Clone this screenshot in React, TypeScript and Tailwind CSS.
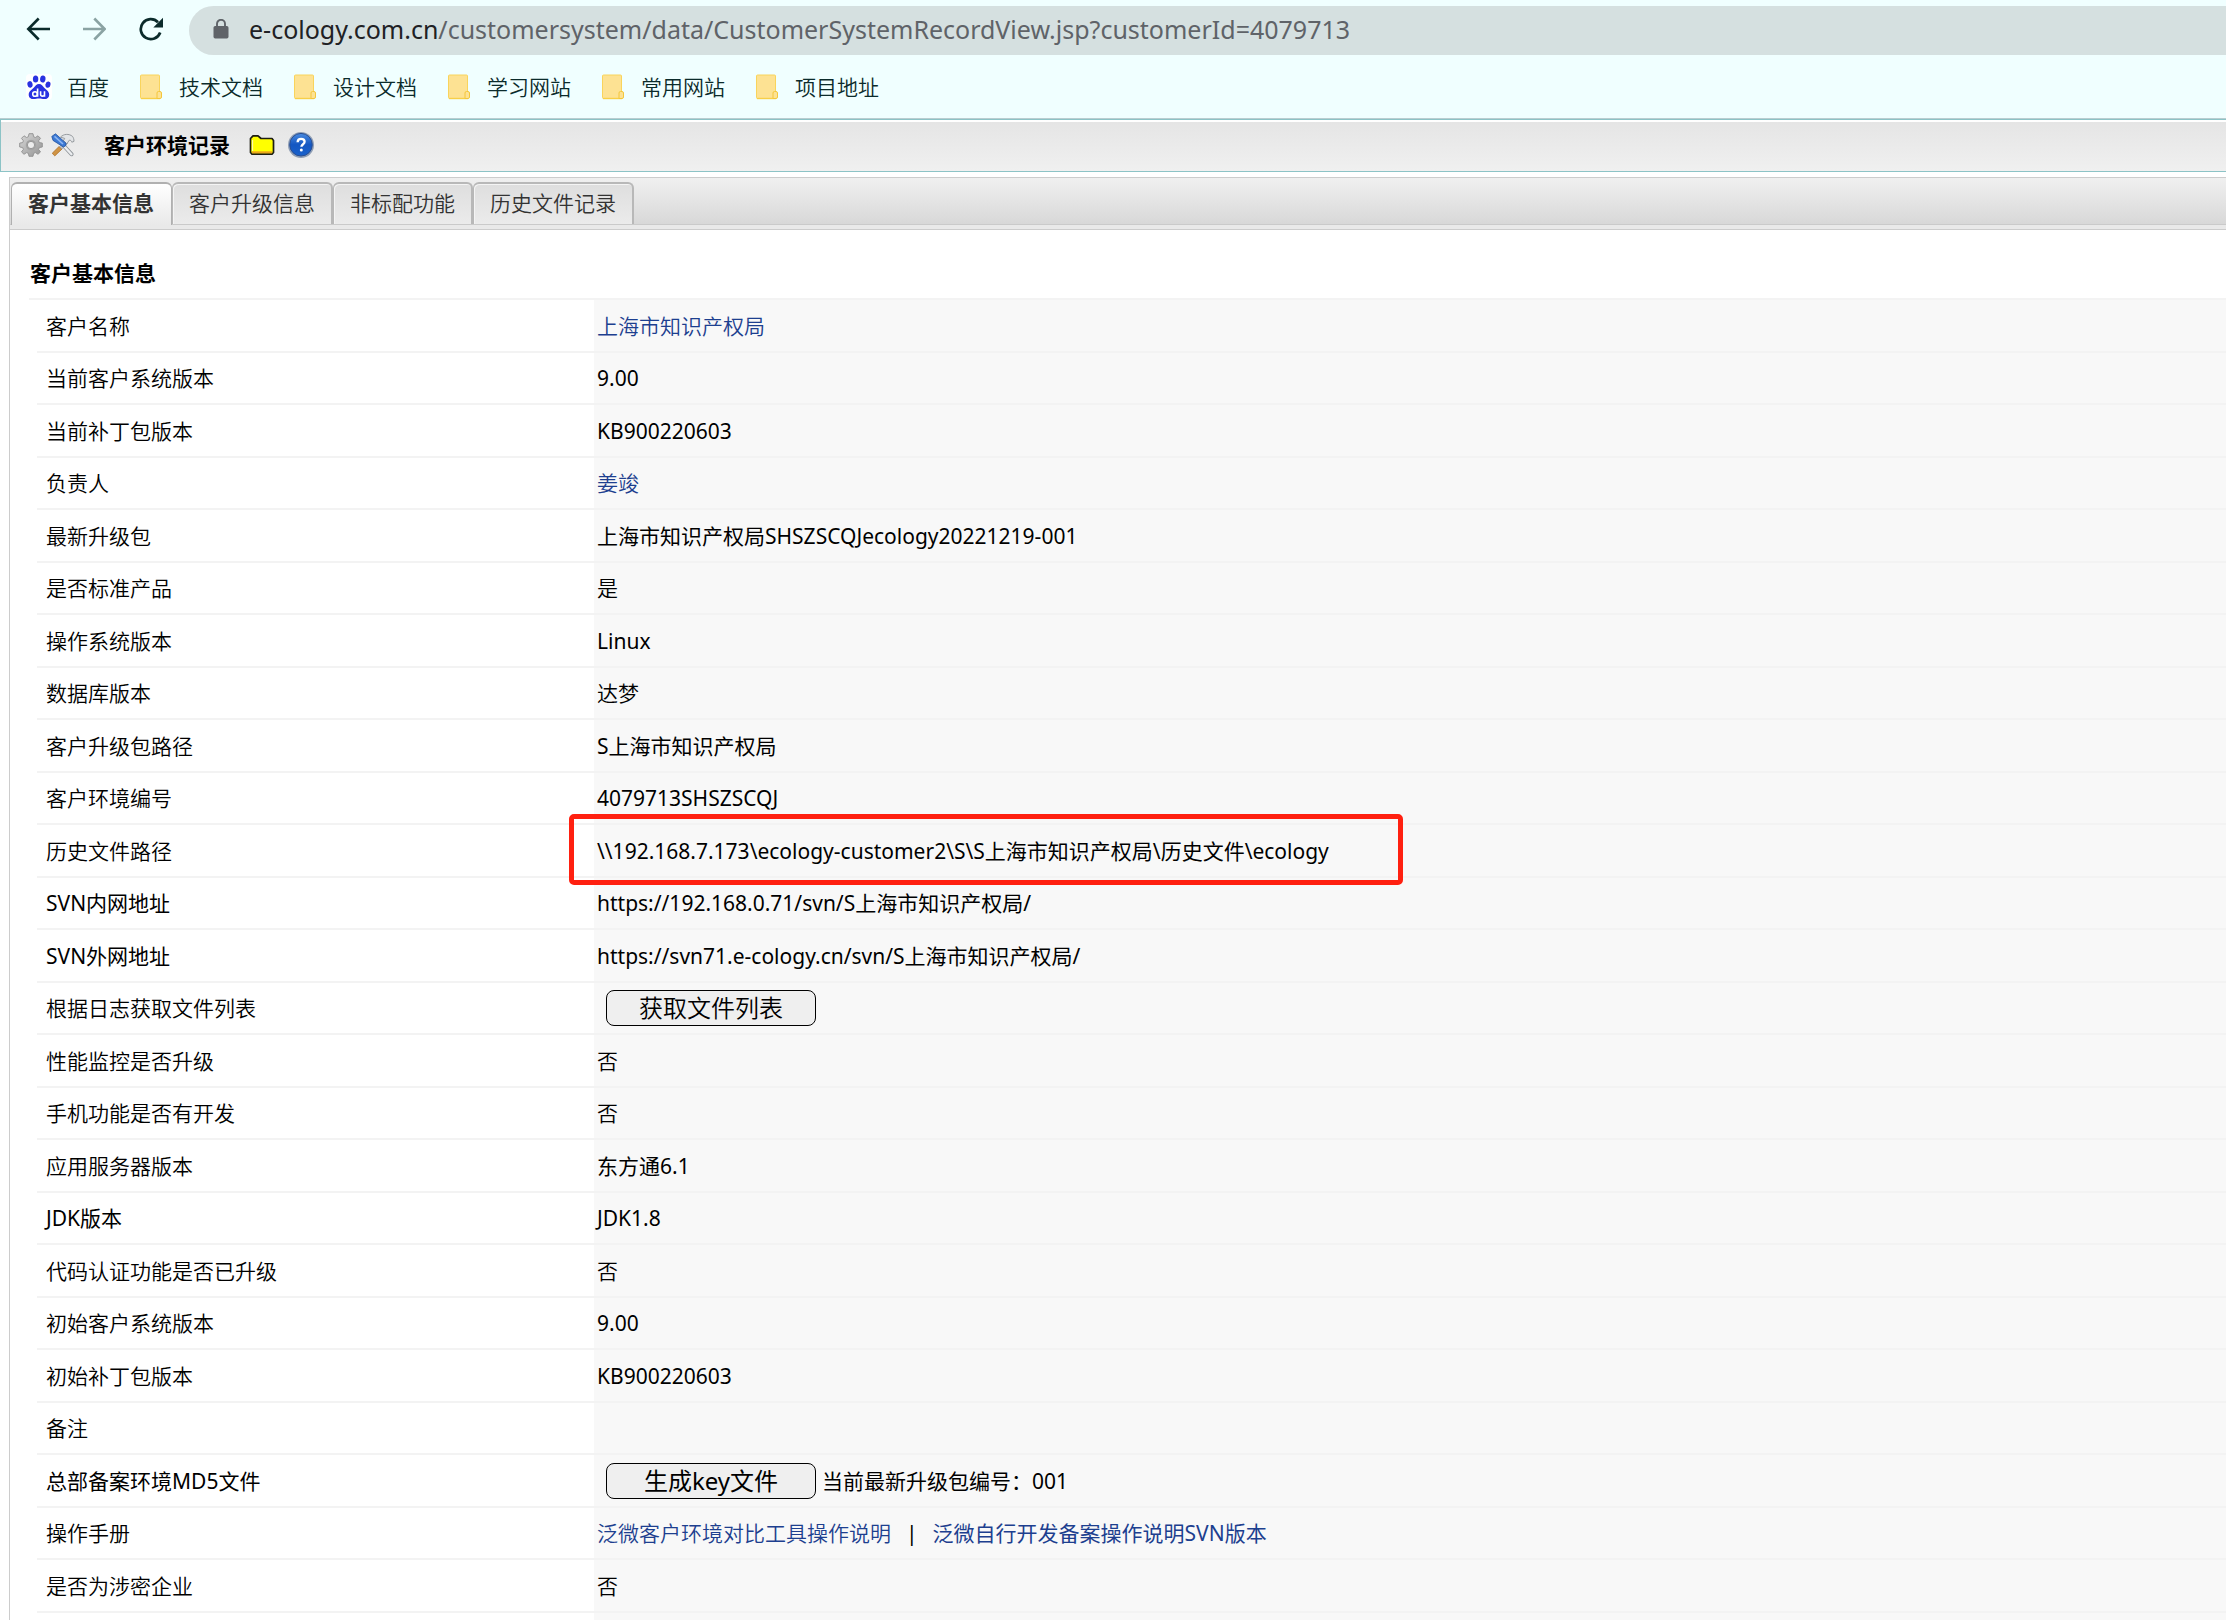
import React from "react";

const FONT = "font-['Noto_Sans','Noto_Sans_CJK_SC',sans-serif]";

function BaiduIcon() {
  return (
    <svg viewBox="0 0 26 26" className="h-[26px] w-[26px] rounded bg-white" aria-hidden="true">
      <g fill="#2932e1">
        <ellipse cx="9.6" cy="5" rx="2.7" ry="3.5" />
        <ellipse cx="16.8" cy="5" rx="2.7" ry="3.5" transform="rotate(8 16.8 5)" />
        <ellipse cx="4" cy="10.4" rx="2.6" ry="3.3" transform="rotate(-12 4 10.4)" />
        <ellipse cx="22" cy="10.6" rx="2.5" ry="3.2" transform="rotate(10 22 10.6)" />
        <path d="M13 10c2.6 0 3.7 2.200 5.200 3.700 2 2 5 3.600 5 7 0 3-2.200 4.400-4.800 4.400-2 0-3.400-.5-5.400-.5s-3.400.5-5.400.5c-2.600 0-4.900-1.400-4.900-4.400 0-3.400 3-5 5-7C9.300 12.200 10.400 10 13 10z" />
      </g>
      <g fill="none" stroke="#fff" strokeWidth="1.600">
        <circle cx="9" cy="20" r="2.300" />
        <path d="M11.600 14.600v8.200M14.600 17.200v3.300c0 2.200 3.900 2.200 3.900 0v-3.300v5.600" />
      </g>
    </svg>
  );
}

function BookmarkFolder() {
  return (
    <svg viewBox="0 0 22 26" className="h-[26px] w-[22px]" aria-hidden="true">
      <rect x="0.5" y="1" width="19" height="23.500" rx="1" fill="#fde293" stroke="#f9d45c" />
      <path d="M1 24.500h19" stroke="#f8cf47" strokeWidth="1.400" />
      <path d="M17 24.500v-5.500q0-1.500 1.500-1.500h1.500q1.500 0 1.500 1.500v4q0 1.500-1.500 1.500z" fill="#fde293" stroke="#f4c63c" />
    </svg>
  );
}

function GearIcon() {
  return (
    <svg viewBox="0 0 24 24" className="h-6 w-6" aria-hidden="true">
      <defs>
        <linearGradient id="gear" x1="0" y1="0" x2="1" y2="1">
          <stop offset="0" stopColor="#d8d8d8" />
          <stop offset="1" stopColor="#949494" />
        </linearGradient>
      </defs>
      <path
        d="M10 .7h4l.6 3 1.800.8L19 2.800 21.500 5.300l-1.900 2.500.7 1.800 3 .5v3.900l-3 .6-.7 1.800 1.900 2.500L19 21.300l-2.600-1.700-1.800.8-.6 2.900h-4l-.6-2.900-1.800-.8L5 21.300 2.500 18.900l1.900-2.500-.7-1.800-3-.6v-3.900l3-.5.7-1.800L2.500 5.300 5 2.800l2.600 1.700 1.800-.8z"
        fill="url(#gear)"
        stroke="#909090"
        strokeWidth="0.900"
      />
      <circle cx="12" cy="12" r="5.200" fill="#a3a3a3" />
      <circle cx="12" cy="12" r="3.600" fill="#ededed" stroke="#8a8a8a" strokeWidth="0.800" />
    </svg>
  );
}

function ToolsIcon() {
  return (
    <svg viewBox="0 0 24 24" className="h-6 w-6" aria-hidden="true">
      <path d="M8 13.500 1.200 20.300l2.600 2.600L11 16z" fill="#d09445" stroke="#a86a24" strokeWidth="0.700" />
      <path d="M14.500 8 8.500 13.500l2.500 2.500 6-6z" fill="#c3c7cc" stroke="#92979d" strokeWidth="0.600" />
      <path d="M9.500 4.200c3-3.400 8.500-3.800 12-.8.900 1 1.500 3 1.500 5l-2.200.8c-.4-1.400-1.200-2.200-2.500-2l-2.500 3.600-3.500-3 1.400-2.400z" fill="#e3e5e7" stroke="#8f9397" strokeWidth="0.900" />
      <path d="M12.500 12.500 20.500 21.200" stroke="#8e9398" strokeWidth="4" strokeLinecap="round" />
      <path d="M12.500 12.500 20.500 21.200" stroke="#eceef0" strokeWidth="2.400" strokeLinecap="round" />
      <path d="M.8 3.400 4.500.8 15 10.200q.8 2.800-2.600 3.800L2 7.400z" fill="#3b78d4" stroke="#23539f" strokeWidth="0.800" />
      <path d="M3.500 3.400 12 11" stroke="#8db7f2" strokeWidth="1.600" />
    </svg>
  );
}

function YellowFolderIcon() {
  return (
    <svg viewBox="0 0 26 22" className="h-[22px] w-[26px]" aria-hidden="true">
      <path d="M1.500 18.500V4.500L4 1.800h5l3 2.700h11l1.500 2v12L23 20.200H3z" fill="#ffff00" stroke="#1d1d12" strokeWidth="1.700" strokeLinejoin="round" />
      <path d="M3 18.300h20" stroke="#eda51c" strokeWidth="2" />
      <path d="M3.500 17V6" stroke="#fffcb0" strokeWidth="1.200" />
    </svg>
  );
}

function HelpIcon() {
  return (
    <svg viewBox="0 0 28 28" className="h-7 w-7" aria-hidden="true">
      <defs>
        <linearGradient id="help" x1="0" y1="0" x2="0" y2="1">
          <stop offset="0" stopColor="#4a8be0" />
          <stop offset="0.500" stopColor="#1457c2" />
          <stop offset="1" stopColor="#1a62cc" />
        </linearGradient>
      </defs>
      <circle cx="14" cy="14" r="13" fill="#8f9eb5" />
      <circle cx="14" cy="13.700" r="11.300" fill="url(#help)" stroke="#2a4f92" />
      <path d="M10.600 11.200c.1-2.200 1.500-3.300 3.500-3.300s3.500 1.100 3.500 2.900c0 2.400-3.200 2.500-3.200 5" fill="none" stroke="#fff" strokeWidth="2.300" />
      <circle cx="14.300" cy="18.900" r="1.500" fill="#fff" />
    </svg>
  );
}

function BrowserBar() {
  return (
    <header className="bg-[#f0ffff] text-[#0b2b2b]">
      <div className="flex items-center pt-[6px] pl-[26px]">
        <button type="button" aria-label="后退" className="mr-8 pb-[3px]">
          <svg viewBox="0 0 24 24" className="h-6 w-6" fill="none" stroke="#0b2b2b" strokeWidth="2.600">
            <path d="M24 12H2.500M12.700 1.500 2.300 12l10.400 10.500" />
          </svg>
        </button>
        <button type="button" aria-label="前进" className="mr-8 pb-[3px]">
          <svg viewBox="0 0 24 24" className="h-6 w-6" fill="none" stroke="#8aa3a3" strokeWidth="2.600">
            <path d="M1 12h21.500M12.300 1.500 22.700 12 12.300 22.500" />
          </svg>
        </button>
        <button type="button" aria-label="重新加载" className="mr-[26px] pb-[3px]">
          <svg viewBox="0 0 25 24" className="h-6 w-[25px]" fill="none" stroke="#0b2b2b" strokeWidth="2.700">
            <path d="M22.200 15.500A10 10 0 1 1 20 5.200" />
            <path d="M25 .8v9.700h-9.700z" fill="#0b2b2b" stroke="none" />
          </svg>
        </button>
        <div className="flex h-[49px] grow items-center rounded-l-full bg-[#d5e0e0] pb-[3px] pl-6">
          <svg viewBox="0 0 16 20" className="mr-5 h-5 w-4" aria-hidden="true">
            <rect x="0.500" y="7" width="15" height="12.500" rx="1.700" fill="#5f6368" />
            <path d="M4 8V4.800a4 4 0 0 1 8 0V8" fill="none" stroke="#5f6368" strokeWidth="1.900" />
          </svg>
          <p className="text-[25px] leading-8 whitespace-nowrap text-[#5f6368]">
            <span className="text-[#202124]">e-cology.com.cn</span>
            /customersystem/data/CustomerSystemRecordView.jsp?customerId=4079713
          </p>
        </div>
      </div>
      <nav className="flex h-[63px] items-center gap-[31px] pl-[26px] text-[21px] leading-7 font-[350]">
        <a href="#" className="flex items-center gap-[15px]">
          <BaiduIcon />
          百度
        </a>
        {["技术文档", "设计文档", "学习网站", "常用网站", "项目地址"].map((name) => (
          <a key={name} href="#" className="flex items-center gap-[17px]">
            <BookmarkFolder />
            {name}
          </a>
        ))}
      </nav>
    </header>
  );
}

function TitleBar() {
  return (
    <div className="border-t border-[#b9cdd0]">
      <div className="border border-r-0 border-[#8cc3c6] pt-[2px]">
        <div className="flex h-[49px] items-center bg-gradient-to-b from-[#e5e5e5] to-[#f0f0f0] pb-1 pl-[18px]">
          <button type="button" aria-label="设置" className="mr-2">
            <GearIcon />
          </button>
          <button type="button" aria-label="工具" className="mr-[29px]">
            <ToolsIcon />
          </button>
          <h1 className="mr-[19px] text-[21px] leading-7 font-bold text-black">客户环境记录</h1>
          <button type="button" aria-label="文件夹" className="mr-3">
            <YellowFolderIcon />
          </button>
          <button type="button" aria-label="帮助">
            <HelpIcon />
          </button>
        </div>
      </div>
    </div>
  );
}

function TabBar() {
  return (
    <div className="border-b border-[#cccccc] bg-[#e9e9e9] pb-1">
      <div
        role="tablist"
        className="flex h-[47px] items-end border-b border-[#cacaca] bg-gradient-to-b from-[#f0f0f0] to-[#d8d8d8] pl-px text-[21px] leading-7 text-[#333333]"
      >
        <button
          type="button"
          role="tab"
          aria-selected="true"
          className="-mb-px h-[43px] rounded-t-md border-x border-t-2 border-[#b0b0b0] bg-gradient-to-b from-white via-[#f4f4f4] to-[#e9e9e9] pr-[17px] pb-[3px] pl-4 font-bold"
        >
          客户基本信息
        </button>
        {["客户升级信息", "非标配功能", "历史文件记录"].map((name) => (
          <button
            key={name}
            type="button"
            role="tab"
            aria-selected="false"
            className="h-[42px] rounded-t-md border-r-2 border-l border-t-2 border-[#b8b8b8] bg-gradient-to-b from-[#dedede] to-[#ebebeb] px-4 pb-[3px] font-[350] shadow-[inset_1px_1px_0_#f4f4f4]"
          >
            {name}
          </button>
        ))}
      </div>
    </div>
  );
}

/* Latin letters and digits look too thin at the weight used for Chinese text. */
function weightFor(content: React.ReactNode) {
  return typeof content === "string" && !/[A-Za-z0-9]/.test(content) ? "font-[350]" : "font-normal";
}

function CellLink({ children }: { children: string }) {
  return (
    <a href="#" className={`text-[#1d3f8f] ${weightFor(children)}`}>
      {children}
    </a>
  );
}

function CellButton({ children }: { children: string }) {
  return (
    <button
      type="button"
      className={`ml-[9px] h-9 w-[210px] rounded-lg border border-black bg-[#efefef] text-[24px] leading-8 text-black ${weightFor(children)}`}
    >
      {children}
    </button>
  );
}

const rows: [string, React.ReactNode][] = [
  ["客户名称", <CellLink>上海市知识产权局</CellLink>],
  ["当前客户系统版本", "9.00"],
  ["当前补丁包版本", "KB900220603"],
  ["负责人", <CellLink>姜竣</CellLink>],
  ["最新升级包", "上海市知识产权局SHSZSCQJecology20221219-001"],
  ["是否标准产品", "是"],
  ["操作系统版本", "Linux"],
  ["数据库版本", "达梦"],
  ["客户升级包路径", "S上海市知识产权局"],
  ["客户环境编号", "4079713SHSZSCQJ"],
  [
    "历史文件路径",
    <>
      {"\\\\192.168.7.173\\ecology-customer2\\S\\S上海市知识产权局\\历史文件\\ecology"}
      <span className="pointer-events-none absolute -top-[11px] -left-[25px] z-10 h-[71px] w-[834px] rounded-[5px] border-[5px] border-[#ff2010]" />
    </>,
  ],
  ["SVN内网地址", "https://192.168.0.71/svn/S上海市知识产权局/"],
  ["SVN外网地址", "https://svn71.e-cology.cn/svn/S上海市知识产权局/"],
  ["根据日志获取文件列表", <CellButton>获取文件列表</CellButton>],
  ["性能监控是否升级", "否"],
  ["手机功能是否有开发", "否"],
  ["应用服务器版本", "东方通6.1"],
  ["JDK版本", "JDK1.8"],
  ["代码认证功能是否已升级", "否"],
  ["初始客户系统版本", "9.00"],
  ["初始补丁包版本", "KB900220603"],
  ["备注", ""],
  [
    "总部备案环境MD5文件",
    <div className="flex items-center gap-[6px]">
      <CellButton>生成key文件</CellButton>
      <span>当前最新升级包编号：001</span>
    </div>,
  ],
  [
    "操作手册",
    <div className="flex items-center gap-[15px]">
      <CellLink>泛微客户环境对比工具操作说明</CellLink>
      <span>|</span>
      <CellLink>泛微自行开发备案操作说明SVN版本</CellLink>
    </div>,
  ],
  ["是否为涉密企业", "否"],
];

export default function App() {
  return (
    <div className={`flex min-h-screen flex-col overflow-hidden bg-white text-black ${FONT}`}>
      <BrowserBar />
      <TitleBar />
      <main className="mt-[5px] ml-[9px] grow border-t border-l border-[#cccccc]">
        <TabBar />
        <section>
          <h2 className="ml-[19px] border-b-2 border-[#f3f3f3] pt-[29px] pb-[11px] pl-px text-[21px] leading-7 font-bold">
            客户基本信息
          </h2>
          <table className="ml-[27px] w-[calc(100%-27px)] table-fixed border-separate border-spacing-0 text-[21px] leading-7">
            <colgroup>
              <col className="w-[557px]" />
              <col />
            </colgroup>
            <tbody>
              {rows.map(([label, value]) => (
                <tr key={label} className="odd:h-[53px] even:h-[52px]">
                  <th scope="row" className={`border-b-2 border-[#f3f3f3] py-0 pl-[9px] text-left ${weightFor(label)}`}>
                    {label}
                  </th>
                  <td className={`relative border-b-2 border-[#f3f3f3] bg-[#f8f8f8] py-0 pl-[3px] ${weightFor(value)}`}>
                    {value}
                  </td>
                </tr>
              ))}
              <tr className="h-[7px]">
                <td className="p-0" />
                <td className="bg-[#f8f8f8] p-0" />
              </tr>
            </tbody>
          </table>
        </section>
      </main>
    </div>
  );
}
